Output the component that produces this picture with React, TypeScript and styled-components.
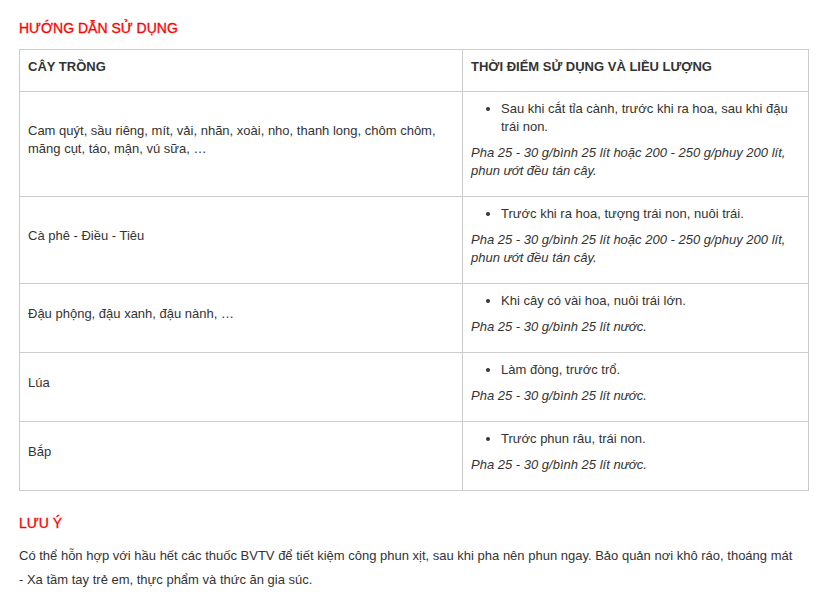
import styled, { createGlobalStyle } from "styled-components";

const GlobalStyle = createGlobalStyle`
  body {
    margin: 0;
    background: #fff;
    font-family: "Liberation Sans", Arial, sans-serif;
    color: #333;
  }
`;

const Page = styled.div`
  width: 790px;
  padding: 19px 0 0 19px;
  font-size: 13px;
  line-height: 18px;
`;

const Heading = styled.h3`
  margin: 0 0 12px;
  font-size: 14px;
  line-height: 18px;
  font-weight: normal;
  color: #ff0000;
  -webkit-text-stroke: 0.3px #ff0000;
`;

const Table = styled.table`
  width: 790px;
  border-collapse: collapse;
  table-layout: fixed;
  margin-bottom: 23px;
`;

const Th = styled.th`
  border: 1px solid #ccc;
  padding: 8px 8px 15px;
  text-align: left;
  vertical-align: top;
  font-weight: bold;
  font-size: 13px;
`;

const Td = styled.td`
  border: 1px solid #ccc;
  padding: 8px;
  vertical-align: middle;
`;

const CellText = styled.p<{ $italic?: boolean }>`
  margin: 0 0 8px;
  font-style: ${(p) => (p.$italic ? "italic" : "normal")};
`;

const List = styled.ul`
  margin: 0 0 8px;
  padding-left: 30px;
`;

const Note = styled.p`
  width: 778px;
  margin: 0;
  line-height: 24px;
  font-size: 13px;
`;

type Row = {
  crop: string;
  time: string;
  dose: string;
};

const rows: Row[] = [
  {
    crop: "Cam quýt, sầu riêng, mít, vải, nhãn, xoài, nho, thanh long, chôm chôm, măng cụt, táo, mận, vú sữa, …",
    time: "Sau khi cắt tỉa cành, trước khi ra hoa, sau khi đậu trái non.",
    dose: "Pha 25 - 30 g/bình 25 lít hoặc 200 - 250 g/phuy 200 lít, phun ướt đều tán cây.",
  },
  {
    crop: "Cà phê - Điều - Tiêu",
    time: "Trước khi ra hoa, tượng trái non, nuôi trái.",
    dose: "Pha 25 - 30 g/bình 25 lít hoặc 200 - 250 g/phuy 200 lít, phun ướt đều tán cây.",
  },
  {
    crop: "Đậu phộng, đậu xanh, đậu nành, …",
    time: "Khi cây có vài hoa, nuôi trái lớn.",
    dose: "Pha 25 - 30 g/bình 25 lít nước.",
  },
  { crop: "Lúa", time: "Làm đòng, trước trổ.", dose: "Pha 25 - 30 g/bình 25 lít nước." },
  { crop: "Bắp", time: "Trước phun râu, trái non.", dose: "Pha 25 - 30 g/bình 25 lít nước." },
];

export default function App() {
  return (
    <>
      <GlobalStyle />
      <Page>
        <Heading>HƯỚNG DẪN SỬ DỤNG</Heading>
        <Table>
          <colgroup>
            <col style={{ width: 443 }} />
            <col />
          </colgroup>
          <thead>
            <tr>
              <Th>CÂY TRỒNG</Th>
              <Th>THỜI ĐIỂM SỬ DỤNG VÀ LIỀU LƯỢNG</Th>
            </tr>
          </thead>
          <tbody>
            {rows.map((r) => (
              <tr key={r.crop}>
                <Td>
                  <CellText>{r.crop}</CellText>
                </Td>
                <Td>
                  <List>
                    <li>{r.time}</li>
                  </List>
                  <CellText $italic>{r.dose}</CellText>
                </Td>
              </tr>
            ))}
          </tbody>
        </Table>
        <Heading>LƯU Ý</Heading>
        <Note>
          Có thể hỗn hợp với hầu hết các thuốc BVTV để tiết kiệm công phun xịt, sau khi pha nên phun ngay. Bảo quản
          nơi khô ráo, thoáng mát - Xa tầm tay trẻ em, thực phẩm và thức ăn gia súc.
        </Note>
      </Page>
    </>
  );
}
